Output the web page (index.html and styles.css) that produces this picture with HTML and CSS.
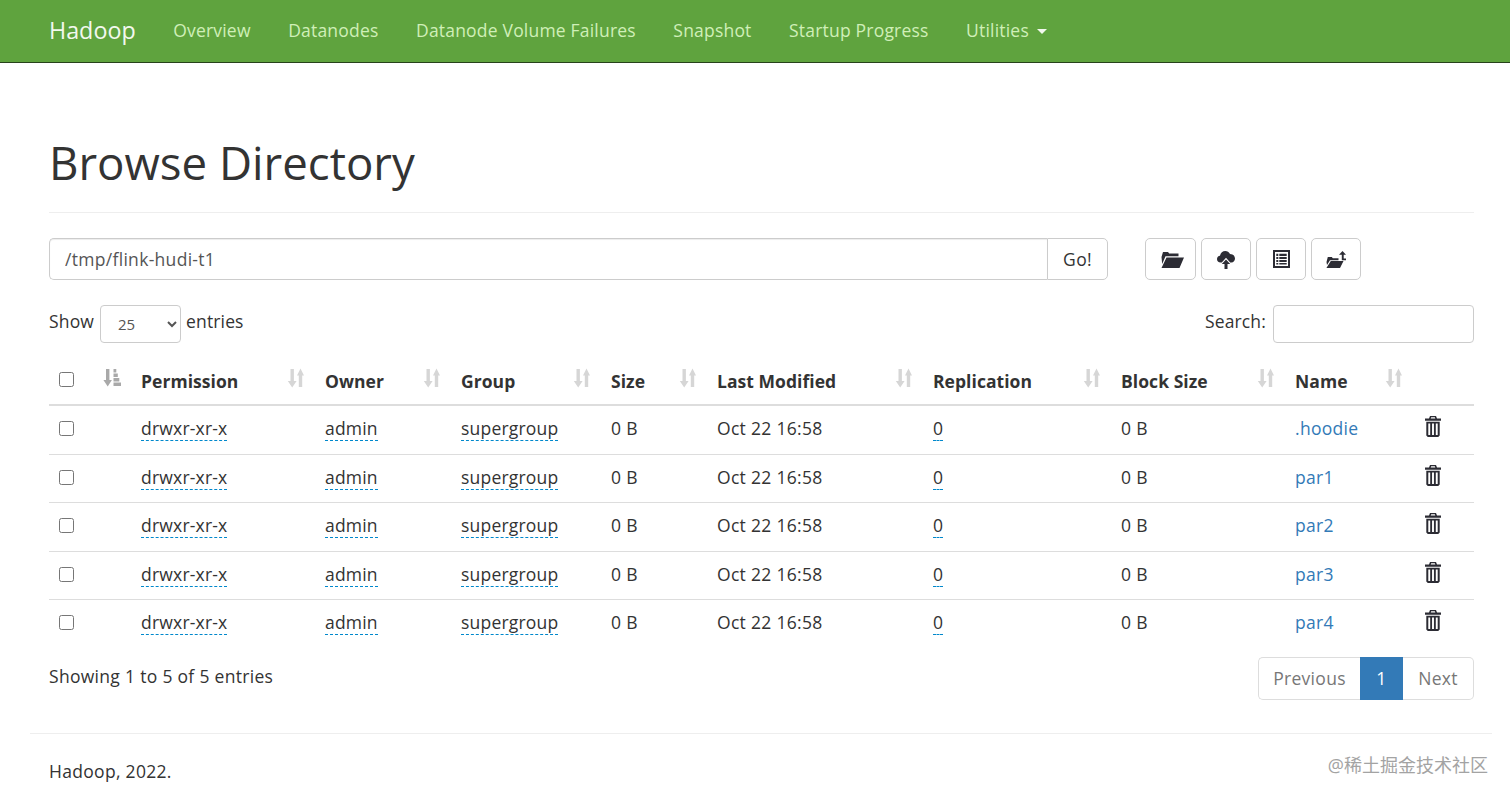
FILE: index.html
```html
<!DOCTYPE html>
<html lang="en">
<head>
<meta charset="utf-8">
<title>Browse Directory</title>
<link rel="stylesheet" href="styles.css">
</head>
<body>
<svg class="defs" width="0" height="0" aria-hidden="true">
  <defs>
    <symbol id="sort" viewBox="0 0 17 20">
      <path d="M3.500 1h3.400v12h2.700L5.200 19.500.8 13h2.700zM10 7.500 13.500.5 17 7.500h-1.800V19h-3.400V7.500z"/>
    </symbol>
    <symbol id="sorted" viewBox="0 0 18 19">
      <path d="M3 1h3.400v11h2.500L4.700 18.500.4 12H3zM10.500 1h2.800v3.500h-2.800zM10.500 5.500h4.300v3.500h-4.300zM10.500 10h5.800v3.500h-5.800zM10.500 14.500H18V18h-7.500z"/>
    </symbol>
    <symbol id="trash" viewBox="0 0 16 21">
      <path fill-rule="evenodd" d="M5 0h6l1 2.500h4v2.200H0V2.500h4zM6.200 1.200 5.700 2.500h4.600l-.5-1.300zM1.300 5.800h13.400v13.700L13.200 21H2.800l-1.500-1.500zM3.300 7.500v11.500h1.900V7.500zM7.050 7.500v11.500h1.900V7.500zM10.800 7.500v11.500h1.900V7.500z"/>
    </symbol>
    <symbol id="folder" viewBox="0 0 23 17">
      <path d="M.5 6 2 1h5l1.200 1.500h9.300v2.700H4.500L1.200 13zM5.500 6.500H23L18.500 17H.5z"/>
    </symbol>
    <symbol id="cloud" viewBox="0 0 18 19">
      <path d="M3.600 12.500C1.300 12.500 0 11 0 9c0-1.800 1.300-3.100 3-3.200C3.500 3 5.700 1 8.300 1c2 0 3.800 1.100 4.700 2.900 2.800 0 5 2 5 4.600 0 2.300-1.500 4-3.600 4h-1.200L9 7.800 4.800 12.500z"/>
      <path d="M9 9.500 13.200 14H10.500v5h-3v-5H4.800z"/>
    </symbol>
    <symbol id="list" viewBox="0 0 17 18">
      <path fill-rule="evenodd" d="M0 0h17v18H0zM2 2v14h13V2zM3.300 3.800h2v2.200h-2zM3.300 7h2v2h-2zM3.300 10h2v2h-2zM3.300 13h2v1.600h-2zM6.300 3.800h7.400v2.200H6.300zM6.300 7h7.400v2H6.300zM6.300 10h7.400v2H6.300zM6.300 13h7.400v1.600H6.300z"/>
    </symbol>
    <symbol id="folder-up" viewBox="0 0 20 17">
      <path d="M.5 11 1.800 6h4l1 1.300h5.700v1.900H4L1 14zM4.800 10H17.500L14 17H.4z"/>
      <path d="M16.500 0 20 3.800h-2.300v3.700H20v1.800h-4.200V3.800H13z"/>
    </symbol>
  </defs>
</svg>

<nav class="navbar">
  <a class="brand">Hadoop</a>
  <a class="nav-link">Overview</a>
  <a class="nav-link">Datanodes</a>
  <a class="nav-link">Datanode Volume Failures</a>
  <a class="nav-link">Snapshot</a>
  <a class="nav-link">Startup Progress</a>
  <a class="nav-link">Utilities <span class="caret"></span></a>
</nav>

<main class="container">
  <div class="page-header"><h1>Browse Directory</h1></div>

  <div class="toolbar">
    <div class="input-group">
      <input class="path-input" type="text" value="/tmp/flink-hudi-t1">
      <button class="go-btn">Go!</button>
    </div>
    <div class="icon-btns">
      <button class="icon-btn icon-btn-wide"><svg class="ico-folder"><use href="#folder"/></svg></button>
      <button class="icon-btn"><svg class="ico-cloud"><use href="#cloud"/></svg></button>
      <button class="icon-btn"><svg class="ico-list"><use href="#list"/></svg></button>
      <button class="icon-btn"><svg class="ico-folder-up"><use href="#folder-up"/></svg></button>
    </div>
  </div>

  <div class="table-controls">
    <label class="length">Show <select class="length-select"><option>25</option></select> entries</label>
    <label class="search">Search: <input class="search-input" type="text"></label>
  </div>

  <table class="files">
    <colgroup>
      <col class="c-check"><col class="c-sort"><col class="c-perm"><col class="c-owner"><col class="c-group"><col class="c-size"><col class="c-date"><col class="c-repl"><col class="c-block"><col class="c-name"><col class="c-del">
    </colgroup>
    <thead>
      <tr>
        <th class="check-cell"><input type="checkbox"></th>
        <th class="sorted-cell"><svg class="ico-sorted"><use href="#sorted"/></svg></th>
        <th>Permission<svg class="ico-sort"><use href="#sort"/></svg></th>
        <th>Owner<svg class="ico-sort"><use href="#sort"/></svg></th>
        <th>Group<svg class="ico-sort"><use href="#sort"/></svg></th>
        <th>Size<svg class="ico-sort"><use href="#sort"/></svg></th>
        <th>Last Modified<svg class="ico-sort"><use href="#sort"/></svg></th>
        <th>Replication<svg class="ico-sort"><use href="#sort"/></svg></th>
        <th>Block Size<svg class="ico-sort"><use href="#sort"/></svg></th>
        <th>Name<svg class="ico-sort"><use href="#sort"/></svg></th>
        <th></th>
      </tr>
    </thead>
    <tbody>
      <tr><td class="check-cell"><input type="checkbox"></td><td></td><td><span class="editable">drwxr-xr-x</span></td><td><span class="editable">admin</span></td><td><span class="editable">supergroup</span></td><td>0 B</td><td>Oct 22 16:58</td><td><span class="editable">0</span></td><td>0 B</td><td><a class="file-link">.hoodie</a></td><td><svg class="ico-trash"><use href="#trash"/></svg></td></tr>
      <tr><td class="check-cell"><input type="checkbox"></td><td></td><td><span class="editable">drwxr-xr-x</span></td><td><span class="editable">admin</span></td><td><span class="editable">supergroup</span></td><td>0 B</td><td>Oct 22 16:58</td><td><span class="editable">0</span></td><td>0 B</td><td><a class="file-link">par1</a></td><td><svg class="ico-trash"><use href="#trash"/></svg></td></tr>
      <tr><td class="check-cell"><input type="checkbox"></td><td></td><td><span class="editable">drwxr-xr-x</span></td><td><span class="editable">admin</span></td><td><span class="editable">supergroup</span></td><td>0 B</td><td>Oct 22 16:58</td><td><span class="editable">0</span></td><td>0 B</td><td><a class="file-link">par2</a></td><td><svg class="ico-trash"><use href="#trash"/></svg></td></tr>
      <tr><td class="check-cell"><input type="checkbox"></td><td></td><td><span class="editable">drwxr-xr-x</span></td><td><span class="editable">admin</span></td><td><span class="editable">supergroup</span></td><td>0 B</td><td>Oct 22 16:58</td><td><span class="editable">0</span></td><td>0 B</td><td><a class="file-link">par3</a></td><td><svg class="ico-trash"><use href="#trash"/></svg></td></tr>
      <tr><td class="check-cell"><input type="checkbox"></td><td></td><td><span class="editable">drwxr-xr-x</span></td><td><span class="editable">admin</span></td><td><span class="editable">supergroup</span></td><td>0 B</td><td>Oct 22 16:58</td><td><span class="editable">0</span></td><td>0 B</td><td><a class="file-link">par4</a></td><td><svg class="ico-trash"><use href="#trash"/></svg></td></tr>
    </tbody>
  </table>

  <div class="table-footer">
    <div class="info">Showing 1 to 5 of 5 entries</div>
    <div class="pagination">
      <a class="page page-prev">Previous</a><a class="page page-current">1</a><a class="page page-next">Next</a>
    </div>
  </div>
</main>

<footer class="footer">Hadoop, 2022.</footer>
<div class="watermark">@稀土掘金技术社区</div>
</body>
</html>
```

FILE: styles.css
```css
* { box-sizing: border-box; }
html, body { margin: 0; padding: 0; height: 798px; overflow: hidden; }
body {
  position: relative;
  font-family: "Open Sans", "Noto Sans CJK SC", sans-serif;
  font-size: 17.500px;
  letter-spacing: .3px;
  line-height: 25px;
  color: #333;
  background: #fff;
}
.defs { position: absolute; }

.navbar {
  display: flex;
  align-items: center;
  height: 63px;
  padding: 0 0 2px 49px;
  background: #5fa33e;
  border-bottom: 1px solid #27421b;
}
.brand { font-size: 23.300px; letter-spacing: 0; color: #f2f8ee; margin-right: 37.500px; }
.nav-link { color: #d0efb8; margin-right: 37.500px; letter-spacing: .2px; white-space: nowrap; }
.caret {
  display: inline-block;
  width: 0; height: 0;
  margin-left: 3px;
  vertical-align: middle;
  border-top: 5px solid #f2f8ee;
  border-left: 5px solid transparent;
  border-right: 5px solid transparent;
}

.container { margin: 0 36px 0 49px; }
.page-header {
  height: 150px;
  padding-top: 69.500px;
  border-bottom: 1px solid #eee;
}
.page-header h1 {
  margin: 0;
  font-size: 45.600px;
  letter-spacing: 0;
  line-height: 58px;
  font-weight: 400;
}

.toolbar { display: flex; margin-top: 25px; height: 42px; }
.input-group { display: flex; width: 1059px; }
.path-input {
  width: 998px;
  height: 42px;
  padding: 0 15px;
  font: inherit;
  letter-spacing: inherit;
  color: #555;
  border: 1px solid #ccc;
  border-right: 0;
  border-radius: 5px 0 0 5px;
  box-shadow: inset 0 1px 1px rgba(0,0,0,.075);
}
.go-btn {
  width: 61px;
  height: 42px;
  padding: 0;
  font: inherit;
  letter-spacing: inherit;
  color: #333;
  background: #fff;
  border: 1px solid #ccc;
  border-radius: 0 5px 5px 0;
}
.icon-btns { display: flex; gap: 5px; margin-left: 37px; }
.icon-btn {
  display: flex;
  align-items: center;
  justify-content: center;
  width: 50px;
  height: 42px;
  padding: 0;
  background: #fff;
  border: 1px solid #ccc;
  border-radius: 5px;
}
.icon-btn-wide { width: 51px; }
.icon-btn svg { fill: #2c2c34; }
.ico-folder { width: 23px; height: 17px; margin-left: 4px; }
.ico-cloud { width: 18px; height: 19px; }
.ico-list { width: 17px; height: 18px; margin-top: -1px; }
.ico-folder-up { width: 20px; height: 17px; }

.table-controls {
  display: flex;
  justify-content: space-between;
  align-items: flex-start;
  margin-top: 25px;
  height: 38px;
}
.length, .search { display: flex; align-items: center; height: 32px; letter-spacing: .15px; }
.length-select {
  width: 81px;
  height: 38px;
  margin: 5px 5px 0 6px;
  padding: 0 0 0 13px;
  font: inherit;
  font-size: 15px;
  letter-spacing: 0;
  color: #555;
  background: #fff;
  border: 1px solid #ccc;
  border-radius: 4px;
}
.search-input {
  width: 201px;
  height: 38px;
  margin: 5px 0 0 7px;
  border: 1px solid #ccc;
  border-radius: 4px;
}

.files {
  width: 1425px;
  margin-top: 12px;
  border-collapse: collapse;
  table-layout: fixed;
}
.c-check { width: 44px; }
.c-sort { width: 38px; }
.c-perm { width: 184px; }
.c-owner { width: 136px; }
.c-group { width: 150px; }
.c-size { width: 106px; }
.c-date { width: 216px; }
.c-repl { width: 188px; }
.c-block { width: 174px; }
.c-name { width: 128px; }
.c-del { width: 61px; }
th, td { padding: 0 10px; text-align: left; white-space: nowrap; }
th {
  position: relative;
  height: 50px;
  padding-top: 4px;
  font-weight: 700;
  letter-spacing: .05px;
  color: #333;
  border-bottom: 2px solid #ddd;
}
td { height: 48px; padding-bottom: 1px; border-top: 1px solid #ddd; }
tbody tr:nth-child(odd) td { height: 49px; padding-bottom: 3px; }
tbody tr:first-child td { border-top: 0; }
.check-cell input { display: block; width: 15px; height: 15px; margin: 0; }
th.check-cell { padding-top: 0; }
.ico-sort, .ico-sorted {
  position: absolute;
  top: 13px;
  width: 17px;
  height: 20px;
  fill: #d6d6d6;
}
.ico-sort { right: 11px; }
.ico-sorted { left: 10px; width: 18px; height: 19px; fill: #a9a9a9; }
.editable { border-bottom: 1px dashed #08c; letter-spacing: .2px; }
.file-link { color: #337ab7; }
.ico-trash { display: block; width: 16px; height: 21px; margin: -4px 0 0 2px; fill: #2c2c34; }

.table-footer {
  display: flex;
  justify-content: space-between;
  align-items: flex-start;
  margin-top: 9px;
  height: 76px;
}
.info { padding-top: 7px; }
.pagination { display: flex; height: 43px; }
.page {
  display: flex;
  align-items: center;
  justify-content: center;
  color: #777;
  background: #fff;
  border: 1px solid #ddd;
}
.page-prev { width: 102px; border-radius: 5px 0 0 5px; border-right: 0; }
.page-next { width: 71px; border-radius: 0 5px 5px 0; border-left: 0; }
.page-current { width: 43px; color: #fff; background: #337ab7; border-color: #337ab7; }

.footer {
  margin: 0 18px 0 30px;
  padding: 25px 0 0 19px;
  border-top: 1px solid #eee;
}
.watermark {
  position: absolute;
  right: 22px;
  bottom: 20px;
  font-size: 18px;
  letter-spacing: 0;
  line-height: 26px;
  color: #a3a3a3;
}
```
